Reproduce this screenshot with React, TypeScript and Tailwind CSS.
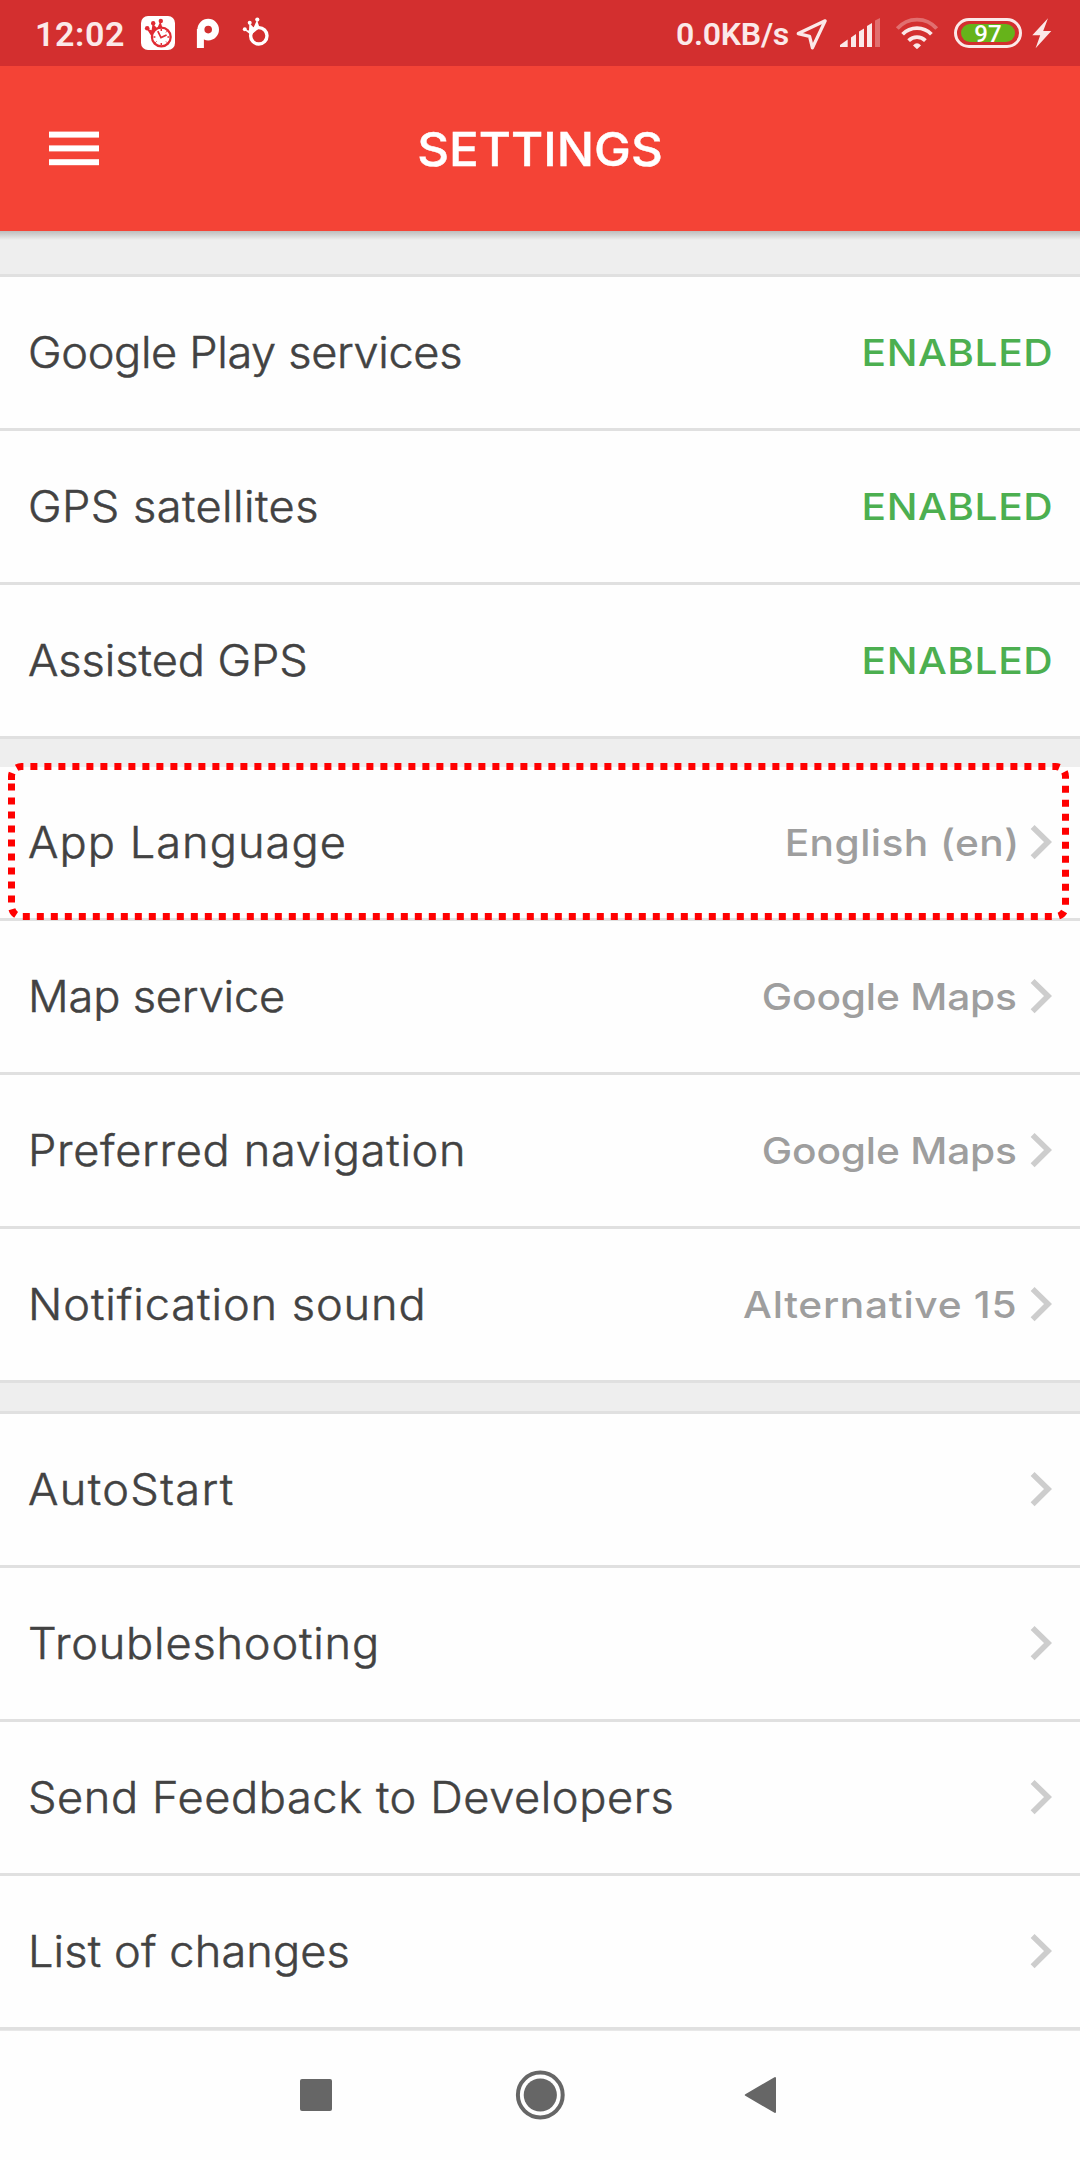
import React from "react";
import { Navigation } from "lucide-react";

type Item = {
  label: string;
  tracking: string;
  value?: string;
  valueClass?: string;
  enabled?: boolean;
};

const providers: Item[] = [
  { label: "Google Play services", tracking: "tracking-[-0.34px]", enabled: true },
  { label: "GPS satellites", tracking: "tracking-[0.42px]", enabled: true },
  { label: "Assisted GPS", tracking: "tracking-[-0.05px]", enabled: true },
];

const preferences: Item[] = [
  { label: "App Language", tracking: "tracking-[1px]", value: "English (en)", valueClass: "tracking-[0.38px] mr-[10px]" },
  { label: "Map service", tracking: "tracking-[-0.15px]", value: "Google Maps", valueClass: "tracking-[-0.18px] mr-[13px]" },
  { label: "Preferred navigation", tracking: "tracking-[0.66px]", value: "Google Maps", valueClass: "tracking-[-0.18px] mr-[13px]" },
  { label: "Notification sound", tracking: "tracking-[0.88px]", value: "Alternative 15", valueClass: "tracking-[0.63px] mr-[13px]" },
];

const support: Item[] = [
  { label: "AutoStart", tracking: "tracking-[1.3px]" },
  { label: "Troubleshooting", tracking: "tracking-[0.75px]" },
  { label: "Send Feedback to Developers", tracking: "tracking-[0.56px]" },
  { label: "List of changes", tracking: "tracking-[0.1px]" },
];

function Chevron() {
  return (
    <svg className="h-[35px] w-[22px] shrink-0" viewBox="0 0 22 35" fill="none" stroke="#cdcdcd" strokeWidth="5.6">
      <path d="M2.6 2 18 17.1 2.6 32.2" />
    </svg>
  );
}

function Row({ item }: { item: Item }) {
  return (
    <li className="flex h-[154px] items-center border-b-[3px] border-[#e0e0e0] bg-[#fefefe] px-7 whitespace-nowrap">
      <span
        className={`origin-left scale-x-105 text-[43px] leading-none font-light text-[#424242] [-webkit-text-stroke:0.5px_#424242] ${item.tracking}`}
      >
        {item.label}
      </span>
      {item.enabled ? (
        <span className="-mr-px ml-auto origin-right scale-x-110 text-[37px] leading-none font-medium tracking-[0.48px] text-[#4caf50]">
          ENABLED
        </span>
      ) : (
        <span className="ml-auto flex items-center">
          {item.value && (
            <span className={`origin-right scale-x-110 text-[37px] leading-none font-medium text-[#9e9e9e] ${item.valueClass}`}>
              {item.value}
            </span>
          )}
          <Chevron />
        </span>
      )}
    </li>
  );
}

function AlarmBadge() {
  return (
    <svg className="ml-[17px] size-[34px]" viewBox="0 0 34 34">
      <rect width="34" height="34" rx="7" fill="#fff" />
      <g fill="#e02b33">
        <circle cx="6.2" cy="12.3" r="2.3" />
        <circle cx="12.2" cy="7.2" r="2.2" />
        <circle cx="19.8" cy="5" r="2.2" />
        <path d="M5.5 12.5 10.6 14.2 11.6 7.5 16.2 12.2 19.4 5.2 21.8 13 10.6 20.6Z" />
      </g>
      <circle cx="20.3" cy="21" r="9.4" fill="#fff" stroke="#e02b33" strokeWidth="2.2" />
      <path d="M16.8 15.2 20 21.6 25.6 19" fill="none" stroke="#e02b33" strokeWidth="1.7" />
      <path d="M20.3 13v2M20.3 27v2M12.4 21h2M26.4 21h2" stroke="#e02b33" strokeWidth="1.5" />
      <path d="M14.2 26.8l1.4-1.4M25 25.5l1.4 1.4M25 16.4l1.4-1.4" stroke="#e02b33" strokeWidth="1" />
    </svg>
  );
}

function ParkingBadge() {
  return (
    <svg className="ml-[21px] h-[34px] w-6" viewBox="0 0 24 34" fill="#fff">
      <circle cx="12.2" cy="13.6" r="7.3" fill="none" stroke="#fff" strokeWidth="7" />
      <rect x="0.9" y="13" width="7" height="19" />
    </svg>
  );
}

function CrownRing() {
  return (
    <svg className="ml-[22px] h-[34px] w-7" viewBox="0 0 28 34" fill="#fff">
      <circle cx="16.8" cy="19.8" r="8.2" fill="none" stroke="#fff" strokeWidth="3.4" />
      <circle cx="2.8" cy="13.2" r="2" />
      <circle cx="7.7" cy="6.8" r="2" />
      <circle cx="15.3" cy="3.6" r="2.1" />
      <path d="M2 13.5 7 14.6 7.4 7 11.6 11.4 15 4 17.6 11.8 9 19Z" />
    </svg>
  );
}

function StatusBar() {
  return (
    <div className="flex h-[66px] items-center bg-[#d32f2f] pr-7 pl-[35px] font-[Roboto,sans-serif] font-medium text-[#fbe9e9]">
      <span className="mt-0.5 w-[89px] text-[34px] leading-none font-semibold tracking-[0.6px]">12:02</span>
      <AlarmBadge />
      <ParkingBadge />
      <CrownRing />
      <span className="mt-0.5 mr-[5px] ml-auto text-[32px] leading-none font-semibold tracking-[-0.25px]">0.0KB/s</span>
      <Navigation className="mt-[3px] size-[34px]" strokeWidth={2.3} />
      <svg className="ml-3 h-8 w-10" viewBox="0 0 40 32" fill="currentColor">
        <path d="M0 30V28L7.7 22.5V30Z" />
        <path d="M11 30V20.5L16 17V30Z" />
        <path d="M19 30V14.6L24 11.4V30Z" />
        <path d="M27 30V9L32 6V30Z" />
        <path d="M35 30V3.6L40 1V30Z" opacity="0.35" />
      </svg>
      <svg className="ml-[15px] h-8 w-[44px]" viewBox="0 0 44 32" fill="none" stroke="currentColor" strokeWidth="3.8">
        <path d="M2.3 11.6A26 26 0 0 1 41.7 11.6" opacity="0.35" />
        <path d="M7.6 17.2A20 20 0 0 1 36.4 17.2" />
        <path d="M13.6 23.6A12 12 0 0 1 30.4 23.6" />
        <path d="M18 28.4Q22 24 26 28.4L22 32.2Z" fill="currentColor" stroke="none" />
      </svg>
      <span className="ml-[15px] flex h-[30px] w-[68px] items-center rounded-full border-[3px] border-[#fbe9e9] px-1">
        <span className="flex h-[18px] w-full items-center justify-center rounded-full bg-[#66b31a] pt-px text-2xl leading-none font-medium text-white">
          97
        </span>
      </span>
      <svg className="ml-2.5 h-8 w-5" viewBox="0 0 20 32" fill="currentColor">
        <path d="M16 1.2 0.3 18.2H8.2L3.6 31.2 19.3 14H11.2Z" />
      </svg>
    </div>
  );
}

export default function App() {
  return (
    <div className="flex h-[2160px] w-[1080px] flex-col overflow-hidden bg-[#eeeeee] font-[Inter,sans-serif]">
      <StatusBar />
      <header className="grid h-[165px] grid-cols-[1fr_auto_1fr] items-center bg-[#f44336] px-12">
        <svg className="ml-px h-9 w-[50px]" viewBox="0 0 50 36" fill="#fff">
          <rect y="0.6" width="50" height="6" />
          <rect y="14.4" width="50" height="6" />
          <rect y="28.2" width="50" height="6" />
        </svg>
        <h1 className="scale-x-105 pb-px text-[47px] leading-none font-medium text-white [-webkit-text-stroke:0.4px_#fff]">
          SETTINGS
        </h1>
      </header>
      <div className="h-[43px]">
        <div className="h-[9px] bg-gradient-to-b from-[#bdbdbd] to-[#eeeeee]" />
      </div>
      <ul className="border-t-[3px] border-[#e0e0e0]">
        {providers.map((item) => (
          <Row key={item.label} item={item} />
        ))}
      </ul>
      <ul className="relative mt-7">
        {preferences.map((item) => (
          <Row key={item.label} item={item} />
        ))}
        <svg
          className="pointer-events-none absolute -top-1 left-0 h-[160px] w-[1080px]"
          viewBox="0 0 1080 160"
          fill="none"
          stroke="#ff0000"
          strokeWidth="7"
          strokeDasharray="7 7"
        >
          <path d="M11.5 17V13.5A10 10 0 0 1 21.5 3.5H1055.5A10 10 0 0 1 1065.5 13.5V143.5A10 10 0 0 1 1055.5 153.5H21.5A10 10 0 0 1 11.5 143.5V17" />
        </svg>
      </ul>
      <ul className="mt-7 border-t-[3px] border-[#e0e0e0]">
        {support.map((item) => (
          <Row key={item.label} item={item} />
        ))}
      </ul>
      <nav className="flex flex-1 items-center border-t border-[#e8e8e8] bg-[#fefefe] pb-px pl-[300px]">
        <span className="size-8 rounded-xs bg-[#666666]" />
        <svg className="ml-[183px] size-[50px]" viewBox="0 0 50 50">
          <circle cx="25.3" cy="25" r="22.4" fill="none" stroke="#666666" strokeWidth="4" />
          <circle cx="25.3" cy="25" r="16.6" fill="#666666" />
        </svg>
        <svg className="ml-[179px] h-[38px] w-8" viewBox="0 0 32 38" fill="#666666" stroke="#666666" strokeWidth="2" strokeLinejoin="round">
          <path d="M1.8 19 31 2V36Z" />
        </svg>
      </nav>
    </div>
  );
}
